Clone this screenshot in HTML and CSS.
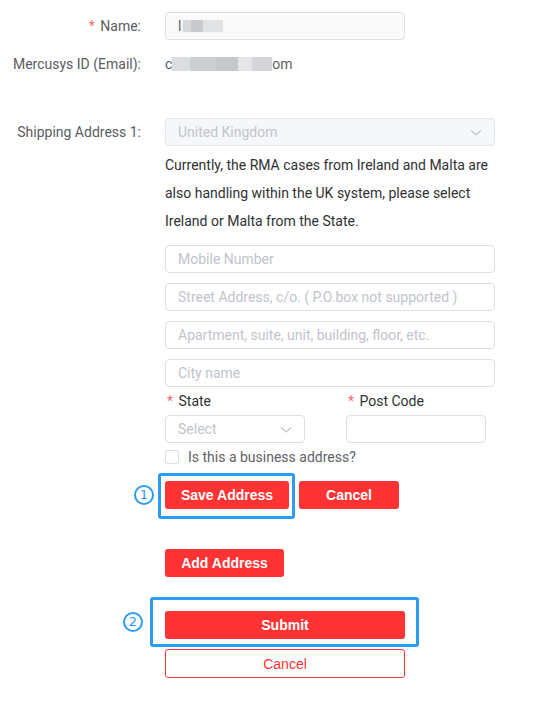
FILE: index.html
```html
<!DOCTYPE html>
<html>
<head>
<meta charset="utf-8">
<link rel="stylesheet" href="styles.css">
</head>
<body>
<div class="form">
  <div class="row row-name">
    <div class="label"><span class="req">*</span> Name:</div>
    <div class="content">
      <div class="input filled"><span class="txt">l</span><span class="blur b1"></span><span class="blur b2"></span><span class="blur b3"></span></div>
    </div>
  </div>
  <div class="row row-email">
    <div class="label">Mercusys ID (Email):</div>
    <div class="content email">c<span class="blur e1"></span><span class="blur e2"></span><span class="blur e3"></span><span class="blur e4"></span><span class="blur e5"></span>om</div>
  </div>
  <div class="row row-ship">
    <div class="label">Shipping Address 1:</div>
    <div class="content">
      <div class="input select disabled"><span class="ph dis">United Kingdom</span><svg class="chev" viewBox="0 0 12 8" width="12" height="8"><path d="M1 1.5 L6 6 L11 1.5" fill="none" stroke="#c0c4cc" stroke-width="1.1"/></svg></div>
      <p class="note">Currently, the RMA cases from Ireland and Malta are also handling within the UK system, please select Ireland or Malta from the State.</p>
      <div class="fields">
        <div class="input"><span class="ph">Mobile Number</span></div>
        <div class="input"><span class="ph">Street Address, c/o. ( P.O.box not supported )</span></div>
        <div class="input"><span class="ph">Apartment, suite, unit, building, floor, etc.</span></div>
        <div class="input"><span class="ph">City name</span></div>
      </div>
      <div class="pair">
        <div class="pair-item">
          <div class="sublabel"><span class="req">*</span> State</div>
          <div class="input select small"><span class="ph">Select</span><svg class="chev" viewBox="0 0 12 8" width="12" height="8"><path d="M1 1.5 L6 6 L11 1.5" fill="none" stroke="#c0c4cc" stroke-width="1.1"/></svg></div>
        </div>
        <div class="pair-item">
          <div class="sublabel"><span class="req">*</span> Post Code</div>
          <div class="input small plain"></div>
        </div>
      </div>
      <label class="check"><span class="box"></span><span>Is this a business address?</span></label>
      <div class="actions">
        <div class="mark-wrap">
          <span class="num n1">1</span>
          <span class="hl hl1"></span>
          <button class="btn red save">Save Address</button>
        </div>
        <button class="btn red cancel">Cancel</button>
      </div>
      <button class="btn red add">Add Address</button>
      <div class="mark-wrap submit-wrap">
        <span class="num n2">2</span>
        <span class="hl hl2"></span>
        <button class="btn red wide">Submit</button>
      </div>
      <button class="btn outline wide">Cancel</button>
    </div>
  </div>
</div>
</body>
</html>
```
FILE: styles.css
```css
* { box-sizing: border-box; }
body {
  margin: 0;
  background: #fff;
  font-family: Roboto, "Liberation Sans", Arial, sans-serif;
  font-size: 14px;
  color: #606266;
}
.form { padding-top: 12px; }
.row {
  display: grid;
  grid-template-columns: 141px 330px;
  column-gap: 24px;
}
.label {
  text-align: right;
  line-height: 28px;
  color: #5a5d63;
  white-space: nowrap;
}
.req { color: #f56c6c; margin-right: 2px; }
.row-email { margin-top: 10px; }
.row-email .label, .email { line-height: 28px; }
.row-ship { margin-top: 40px; }
.email { color: #5a5d63; display: flex; align-items: center; height: 28px; }
.blur { display: inline-block; height: 14px; background: #d4d6d9; }
.e1 { width: 18px; background: #dcdde0; }
.e2 { width: 26px; background: #cdd0d3; }
.e3 { width: 22px; background: #c6c9cc; }
.e4 { width: 14px; background: #e4e5e7; }
.e5 { width: 20px; background: #d2d4d7; }
.input {
  height: 28px;
  border: 1px solid #dcdfe6;
  border-radius: 4px;
  background: #fff;
  display: flex;
  align-items: center;
  padding: 0 12px;
  position: relative;
}
.row-name .input { width: 240px; background: #fafafa; }
.txt { color: #606266; margin-right: 2px; }
.b1 { width: 8px; height: 12px; background: #d6d8db; }
.b2 { width: 12px; height: 12px; background: #c8cacd; }
.b3 { width: 20px; height: 12px; background: #e2e3e5; }
.ph { color: #c0c4cc; white-space: nowrap; }
.disabled { background: #f5f7fa; border-color: #e4e7ed; }
.select .chev { position: absolute; right: 12px; top: 10px; }
.note {
  margin: 5px 0 0;
  line-height: 28px;
  color: #303133;
}
.fields { margin-top: 10px; display: flex; flex-direction: column; gap: 10px; }
.pair { display: flex; gap: 41px; margin-top: 3px; }
.pair-item { width: 140px; }
.sublabel { line-height: 22px; color: #303133; margin-bottom: 3px; padding-left: 2px; }
.input.small { width: 140px; }
.check {
  display: flex; align-items: center; gap: 9px;
  height: 20px; margin-top: 4px; color: #606266;
}
.box { width: 14px; height: 14px; border: 1px solid #dcdfe6; border-radius: 2px; background: #fff; }
.actions { display: flex; gap: 10px; margin-top: 14px; }
.mark-wrap { position: relative; }
.btn {
  height: 28px;
  border-radius: 3px;
  font-family: "Liberation Sans", Arial, sans-serif;
  font-size: 14px;
  cursor: pointer;
  display: block;
  padding: 0;
}
.btn.red { background: #ff3333; border: none; color: #fff; font-weight: bold; }
.save { width: 124px; }
.cancel { width: 100px; }
.add { width: 119px; margin-top: 40px; }
.wide { width: 240px; }
.submit-wrap { margin-top: 34px; }
.btn.outline {
  margin-top: 10px; height: 29px;
  background: #fff; border: 1px solid #ff3333; color: #ff3333; font-weight: normal;
}
.hl {
  position: absolute;
  border: 3px solid #2b9cf2;
  border-radius: 3px;
  pointer-events: none;
}
.hl1 { left: -7px; top: -8px; width: 137px; height: 46px; }
.hl2 { left: -15px; top: -14px; width: 269px; height: 50px; }
.num {
  position: absolute;
  width: 20px;
  height: 20px;
  border: 2px solid #2b9cf2;
  border-radius: 50%;
  color: #2b9cf2;
  font-family: "DejaVu Sans", sans-serif;
  font-weight: normal;
  font-size: 13px;
  line-height: 16px;
  text-align: center;
}
.n1 { left: -31px; top: 4px; }
.n2 { left: -42px; top: 1px; }
```
